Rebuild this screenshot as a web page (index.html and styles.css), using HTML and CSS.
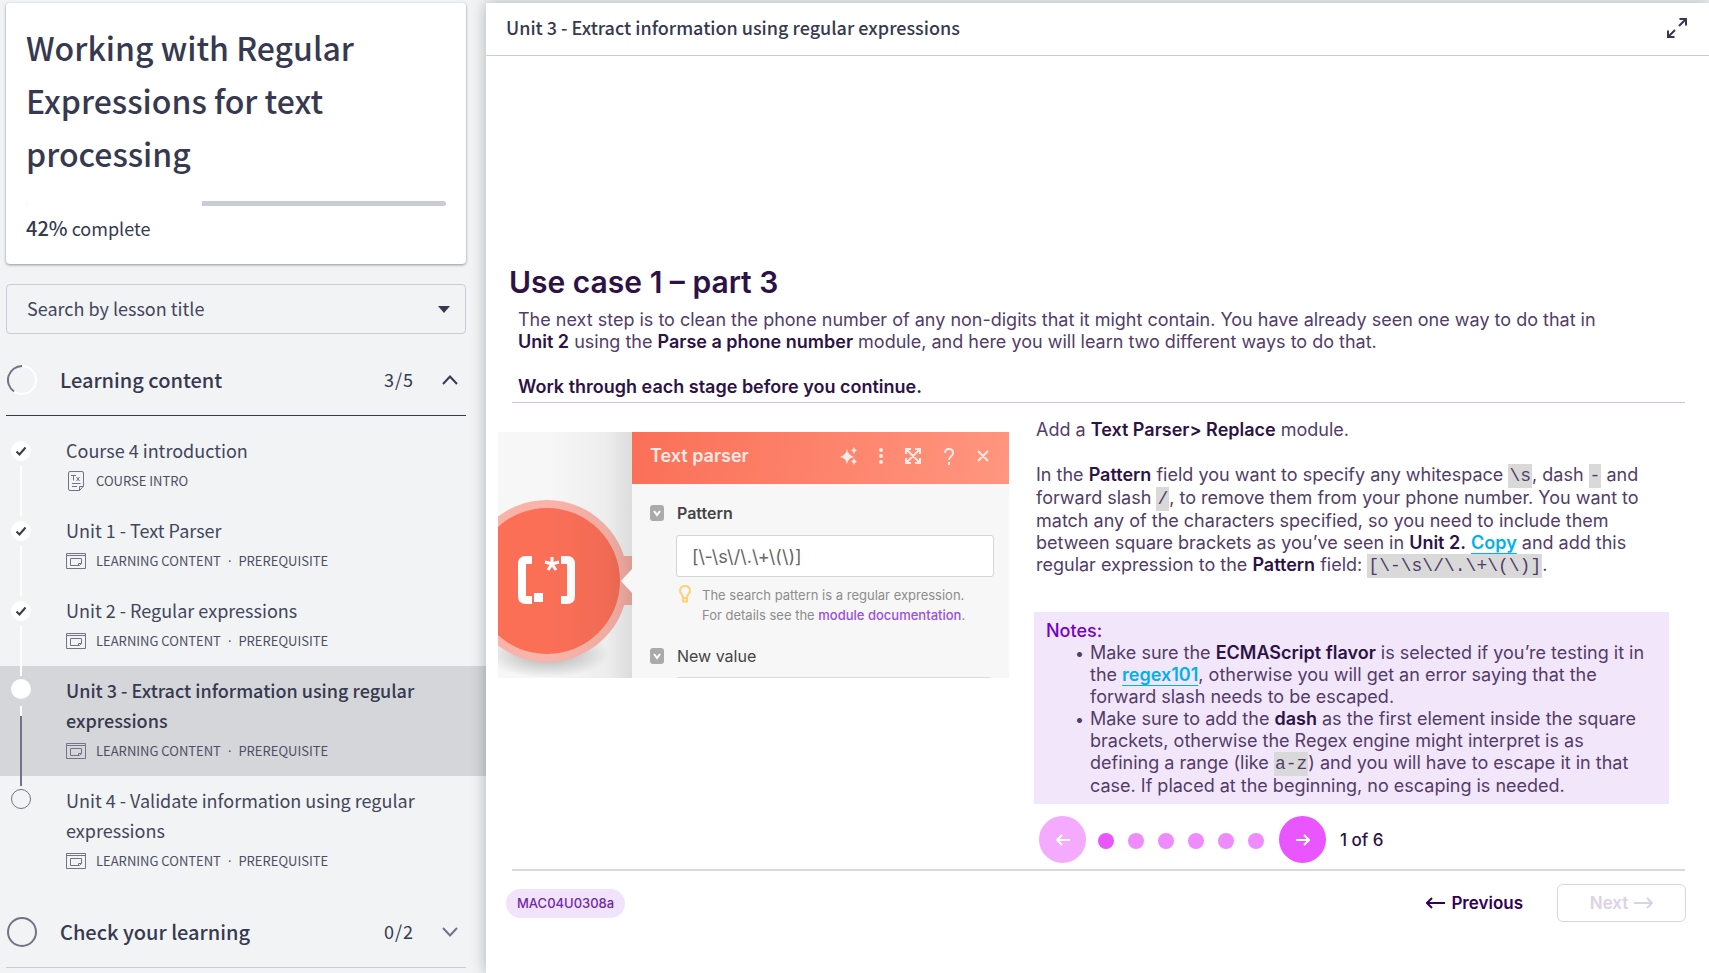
FILE: index.html
```html
<!DOCTYPE html>
<html lang="en">
<head>
<meta charset="utf-8">
<title>Working with Regular Expressions for text processing</title>
<link rel="stylesheet" href="styles.css">
</head>
<body>
<svg class="defs" width="0" height="0" aria-hidden="true">
  <symbol id="content" viewBox="0 0 20 16"><path d="M.5.5h19v15H.5zM.5 2.500h19M4.500 5.500h11v5l-2 2h-9zM12.500 12.500v-2h3"/></symbol>
  <symbol id="check" viewBox="0 0 20 20"><path d="M5.500 10.500l3 3 6-7"/></symbol>
</svg>
<div class="app">
  <aside class="sidebar">
    <section class="card">
      <h1 class="course">Working with Regular Expressions for text processing</h1>
      <div class="progress"><div class="progress-done" style="width:42%"></div></div>
      <p class="percent"><b>42%</b> complete</p>
    </section>
    <div class="search">
      <select class="search-select" aria-label="Search by lesson title"><option>Search by lesson title</option></select>
      <svg class="caret" width="12" height="7" viewBox="0 0 12 7"><path d="M0 0h12L6 7z"/></svg>
    </div>
    <button class="group open">
      <svg class="ring" viewBox="0 0 30 30"><circle cx="15" cy="15" r="14" stroke="#fff"/><path d="M15 1A14 14 0 0 0 7 26.500" stroke="#717486"/></svg>
      <span class="group-name">Learning content</span><span class="count">3/5</span>
      <svg class="chevron" viewBox="0 0 16 10"><path d="M1 9l7-7.500L15 9"/></svg>
    </button>
    <ul class="lessons">
      <li class="lesson done"><svg class="mark"><use href="#check"/></svg>
        <a class="lesson-name" href="#">Course 4 introduction</a>
        <p class="kind"><svg class="kind-icon" viewBox="0 0 20 20"><path d="M2.500 2q0-1.500 1.500-1.500h12q1.500 0 1.500 1.500v13l-4 4.500H4q-1.500 0-1.500-1.500zM13.500 19.500v-4h4M6 12.500h8.500M6 15.500h5M5 4.500h5M7.500 4.500v5M10.500 6l3 4M13.500 6l-3 4"/></svg>COURSE INTRO</p></li>
      <li class="lesson done"><svg class="mark"><use href="#check"/></svg>
        <a class="lesson-name" href="#">Unit 1 - Text Parser</a>
        <p class="kind"><svg class="kind-icon wide"><use href="#content"/></svg>LEARNING CONTENT<span class="sep">·</span>PREREQUISITE</p></li>
      <li class="lesson done"><svg class="mark"><use href="#check"/></svg>
        <a class="lesson-name" href="#">Unit 2 - Regular expressions</a>
        <p class="kind"><svg class="kind-icon wide"><use href="#content"/></svg>LEARNING CONTENT<span class="sep">·</span>PREREQUISITE</p></li>
      <li class="lesson current"><span class="mark"></span>
        <a class="lesson-name" href="#">Unit 3 - Extract information using regular expressions</a>
        <p class="kind"><svg class="kind-icon wide"><use href="#content"/></svg>LEARNING CONTENT<span class="sep">·</span>PREREQUISITE</p></li>
      <li class="lesson todo"><span class="mark"></span>
        <a class="lesson-name" href="#">Unit 4 - Validate information using regular expressions</a>
        <p class="kind"><svg class="kind-icon wide"><use href="#content"/></svg>LEARNING CONTENT<span class="sep">·</span>PREREQUISITE</p></li>
    </ul>
    <button class="group">
      <svg class="ring" viewBox="0 0 30 30"><circle cx="15" cy="15" r="14" stroke="#717486"/></svg>
      <span class="group-name">Check your learning</span><span class="count">0/2</span>
      <svg class="chevron soft" viewBox="0 0 16 10"><path d="M1 1l7 7.500L15 1"/></svg>
    </button>
  </aside>
  <main class="main">
    <header class="topbar">
      <h2 class="unit">Unit 3 - Extract information using regular expressions</h2>
      <button class="expand" aria-label="Full screen"><svg width="20" height="20" viewBox="0 0 20 20"><path d="M12 8l6-6M12.500 1H19v6.500M8 12l-6 6M7.500 19H1v-6.500"/></svg></button>
    </header>
    <article class="slide">
      <h2 class="headline">Use case 1 – part 3</h2>
      <div class="intro">
        <p>The next step is to clean the phone number of any non-digits that it might contain. You have already seen one way to do that in<br><b>Unit 2</b> using the <b>Parse a phone number</b> module, and here you will learn two different ways to do that.</p>
        <p class="stage"><b>Work through each stage before you continue.</b></p>
      </div>
      <div class="columns">
        <figure class="shot">
          <svg class="module" viewBox="0 0 134 246">
            <defs>
              <linearGradient id="shade"><stop offset="0" stop-color="#000" stop-opacity="0"/><stop offset=".7" stop-color="#000" stop-opacity=".04"/><stop offset="1" stop-color="#000" stop-opacity=".11"/></linearGradient>
              <radialGradient id="under"><stop offset="0" stop-color="#000" stop-opacity=".3"/><stop offset="1" stop-color="#000" stop-opacity="0"/></radialGradient>
            </defs>
            <ellipse cx="49" cy="222" rx="62" ry="24" fill="url(#under)"/>
            <path d="M120 124h14v49h-14z" fill="#f8b0a5"/>
            <circle cx="49" cy="149" r="81" fill="#fab3a8"/>
            <circle cx="49" cy="149" r="73" fill="#fb6f57"/>
            <path d="M34 128h-6q-4 0-4 4v32q0 4 4 4h6M63 128h6q4 0 4 4v32q0 4-4 4h-6" fill="none" stroke="#fff" stroke-width="8"/>
            <path d="M36 161h9v9h-9z" fill="#fff"/>
            <path d="M54 125v7M47 130l7 2 7-2M50 138l4-6 4 6" fill="none" stroke="#fff" stroke-width="3"/>
            <path d="M50 0h84v246H50z" fill="url(#shade)"/>
            <path d="M134 137l-11 12 11 12z" fill="#f7f7f7"/>
          </svg>
          <div class="panel">
            <div class="panel-head">
              <span class="panel-title">Text parser</span>
              <svg class="panel-icons" viewBox="0 0 149 20">
                <path class="fill" d="M7 3q1 6 7 8-6 1-7 7-1-6-7-7 6-2 7-8zM14 1q.5 3 3 3.500Q14.500 5 14 8q-.5-3-3-3.500 2.500-.5 3-3.500zM14 12q.5 3 3 3.500-2.500.5-3 3.500-.5-3-3-3.500 2.500-.5 3-3.500z"/>
                <circle class="fill" cx="41" cy="4" r="2"/><circle class="fill" cx="41" cy="10" r="2"/><circle class="fill" cx="41" cy="16" r="2"/>
                <path d="M67 4l12 12M79 4L67 16M66 8V3h5M75 3h5v5M80 12v5h-5M71 17h-5v-5M105 7q0-4 4-4t4 4q0 2-2 3.500t-2 3.500M109 16v3M138 5l10 10M148 5l-10 10"/>
              </svg>
            </div>
            <div class="panel-body">
              <label class="field strong" for="pattern"><svg class="toggle" viewBox="0 0 14 16"><path d="M4 6l3 4 3-4"/></svg>Pattern</label>
              <input class="box" id="pattern" value="[\-\s\/\.\+\(\)]">
              <div class="hint"><svg class="bulb" viewBox="0 0 12 18"><path d="M4 13q0-2-1.500-4Q1 7.500 1 5.500 1.500 1 6 1t5 4.500q0 2-1.500 3.500Q8 11 8 13zM4 14v2.500h4V14"/></svg><p>The search pattern is a regular expression.<br>For details see the <a class="doc" href="#">module documentation</a>.</p></div>
              <div class="field"><svg class="toggle" viewBox="0 0 14 16"><path d="M4 6l3 4 3-4"/></svg>New value</div>
              <div class="cut"></div>
            </div>
          </div>
        </figure>
        <section class="steps">
          <p class="step">Add a <b>Text Parser&gt; Replace</b> module.</p>
          <p class="step pattern-step">In the <b>Pattern</b> field you want to specify any whitespace <code>\s</code>, dash <code>-</code> and<br>forward slash <code>/</code>, to remove them from your phone number. You want to<br>match any of the characters specified, so you need to include them<br>between square brackets as you’ve seen in <b>Unit 2.</b> <a class="link" href="#">Copy</a> and add this<br>regular expression to the <b>Pattern</b> field: <code>[\-\s\/\.\+\(\)]</code>.</p>
          <div class="notes">
            <h3 class="notes-title">Notes:</h3>
            <ul class="notes-list">
              <li>Make sure the <b>ECMAScript flavor</b> is selected if you’re testing it in<br>the <a class="link" href="#">regex101</a>, otherwise you will get an error saying that the<br>forward slash needs to be escaped.</li>
              <li>Make sure to add the <b>dash</b> as the first element inside the square<br>brackets, otherwise the Regex engine might interpret is as<br>defining a range (like <code>a-z</code>) and you will have to escape it in that<br>case. If placed at the beginning, no escaping is needed.</li>
            </ul>
          </div>
          <nav class="pager" aria-label="Stages">
            <button class="round off" aria-label="Previous stage"><svg width="14" height="12" viewBox="0 0 14 12"><path d="M14 6H1M6 1L1 6l5 5"/></svg></button>
            <div class="dots"><i class="dot on"></i><i class="dot"></i><i class="dot"></i><i class="dot"></i><i class="dot"></i><i class="dot"></i></div>
            <button class="round" aria-label="Next stage"><svg width="14" height="12" viewBox="0 0 14 12"><path d="M0 6h13M8 1l5 5-5 5"/></svg></button>
            <span class="page">1 of 6</span>
          </nav>
        </section>
      </div>
      <footer class="foot">
        <span class="badge">MAC04U0308a</span>
        <button class="nav-btn"><svg width="19" height="12" viewBox="0 0 19 12"><path d="M19 6H1M6 1L1 6l5 5"/></svg>Previous</button>
        <button class="nav-btn next" disabled>Next<svg width="19" height="12" viewBox="0 0 19 12"><path d="M0 6h18M13 1l5 5-5 5"/></svg></button>
      </footer>
    </article>
  </main>
</div>
</body>
</html>
```
FILE: styles.css
```css
* { box-sizing: border-box; }
body { margin: 0; background: #f1f3f5; color: #363950; font-family: "Noto Sans CJK SC", "Noto Sans", sans-serif; }
h1, h2, h3, p, ul, figure { margin: 0; padding: 0; }
ul { list-style: none; }
button { border: 0; padding: 0; background: none; font: inherit; color: inherit; cursor: pointer; }
a { color: inherit; text-decoration: none; }
svg { fill: none; stroke: currentColor; display: block; flex: none; }
.defs { position: absolute; }
.app { display: flex; min-height: 100vh; }

.sidebar { flex: none; width: 486px; padding-top: 3px; overflow: hidden; }
.card { margin: 0 20px 20px 6px; padding: 18px 20px 20px; background: #fff; border-radius: 4px; box-shadow: 0 1px 3px rgba(0, 0, 0, .4); }
.course { font-size: 32px; line-height: 53px; font-weight: 500; }
.progress { height: 5px; margin: 21px 0 6px; border-radius: 3px; background: #c9cbd7; overflow: hidden; }
.progress-done { height: 5px; background: #fff; }
.percent { font-size: 18px; line-height: 32px; font-weight: 400; }
.percent b { font-size: 20px; font-weight: 500; }
.search { position: relative; margin: 0 20px 11px 6px; }
.search-select { display: block; appearance: none; width: 100%; height: 50px; padding: 0 20px 2px; border: 1px solid #c9cbd7; border-radius: 4px; background: transparent; color: #43465b; font: 400 18px/30px "Noto Sans CJK SC", sans-serif; }
.caret { position: absolute; right: 16px; top: 22px; fill: #363950; stroke: none; }
.group { display: flex; align-items: center; width: 460px; height: 71px; margin-left: 6px; border-bottom: 1px solid #c9cbd7; text-align: left; }
.group.open { border-color: #363950; }
.ring { width: 30px; height: 30px; margin: 0 23px 0 1px; stroke-width: 2; }
.group-name { flex: 1; padding-bottom: 2px; font-size: 20px; font-weight: 500; }
.count { margin-right: 28px; padding-bottom: 2px; font-size: 18px; font-weight: 400; letter-spacing: 1px; }
.chevron { width: 16px; height: 10px; margin-right: 8px; stroke-width: 2; }
.soft { color: #717486; }
.lessons { padding: 10px 0 11px; }
.lesson { position: relative; padding: 9px 60px 10px 66px; }
.lesson-name { display: block; padding-bottom: 1px; color: #43465b; font-size: 18px; line-height: 30px; font-weight: 400; }
.kind { display: flex; align-items: center; color: #4c4f64; font-size: 13px; line-height: 30px; font-weight: 400; }
.kind-icon { width: 20px; height: 20px; margin-right: 10px; color: #717486; }
.wide { height: 16px; }
.sep { margin: 0 7px; font-family: "Noto Sans", sans-serif; }
.mark { position: absolute; left: 11px; top: 15px; width: 20px; height: 20px; border-radius: 50%; background: #fff; stroke-width: 2; z-index: 1; }
.lesson::after { content: ""; position: absolute; left: 20px; top: 40px; bottom: -10px; width: 2px; background: #fff; z-index: 1; }
.current { background: #d5d6da; }
.current .lesson-name { color: #363950; font-weight: 500; }
.current .mark, .todo .mark { top: 13px; }
.current::after { background: linear-gradient(#fff 10px, #717486 10px); }
.todo .mark { border: 1px solid #717486; background: transparent; }
.todo::after { display: none; }

.main { position: relative; flex: 1; min-width: 0; margin-top: 3px; background: #fff; box-shadow: 0 0 14px rgba(0, 0, 0, .28); z-index: 2; }
.topbar { display: flex; align-items: center; justify-content: space-between; height: 53px; padding: 0 22px 2px 20px; border-bottom: 1px solid #c9cbd7; }
.unit { padding-bottom: 2px; font-size: 18px; line-height: 30px; font-weight: 500; }
.expand svg { stroke-width: 2; }

.slide { padding: 208px 24px 40px 26px; color: #533c69; font-family: Inter, sans-serif; font-size: 18px; font-weight: 400; line-height: 22px; }
.slide b { color: #2d1247; font-weight: 600; }
.headline { margin-left: -3px; color: #2d1247; font-size: 30px; line-height: 36px; font-weight: 600; }
.intro { padding: 9px 0 4px 6px; border-bottom: 1px solid #d0c8d0; white-space: nowrap; }
.stage { margin-top: 23px; }
.columns { display: grid; grid-template-columns: 511px 1fr; gap: 25px; margin-left: -14px; }
.shot { display: flex; height: 246px; margin-top: 29px; overflow: hidden; background: #f7f7f7; color: #444; }
.module { width: 134px; height: 246px; stroke: none; }
.panel { flex: 1; background: #f7f7f7; }
.panel-head { display: flex; align-items: center; justify-content: space-between; height: 52px; padding: 0 20px 4px 18px; background: linear-gradient(100deg, #fb6f57, #ff967f); color: #ffe9e4; }
.panel-title { font-size: 18px; font-weight: 600; }
.panel-icons { width: 149px; height: 20px; stroke-width: 2; }
.fill { fill: currentColor; stroke: none; }
.panel-body { padding: 18px 15px 0 18px; }
.field { display: flex; align-items: center; gap: 13px; font-size: 16px; line-height: 22px; font-weight: 400; }
.strong { font-weight: 600; }
.toggle { width: 14px; height: 16px; border-radius: 3px; background: #aaa; color: #fff; stroke-width: 2; }
.box { display: block; width: calc(100% - 26px); height: 42px; margin: 11px 0 8px 26px; padding: 0 15px; border: 1px solid #d5d5d5; border-radius: 3px; background: #fff; color: #666; font: 400 18px Inter, sans-serif; }
.hint { display: flex; gap: 11px; margin: 0 0 20px 29px; color: #8c8c8c; font-size: 13px; font-weight: 400; line-height: 20px; white-space: nowrap; }
.bulb { width: 12px; height: 18px; color: #fbd275; stroke-width: 2; }
.doc { color: #9b4fe0; font-weight: 500; }
.cut { height: 4px; margin: 10px 3px 0 27px; border-top: 2px solid #ddd; }

.steps { padding-top: 16px; padding-left: 2px; white-space: nowrap; }
.pattern-step { margin: 23px 0 35px; }
code { padding: 2px 1px; background: #d9d9d9; font-family: "Liberation Mono", monospace; font-size: 18px; }
.link { color: #00b0f0; font-weight: 600; text-decoration: underline; text-underline-offset: 4px; }
.notes { margin: 0 16px 12px -2px; padding: 7px 12px; background: #f2e6fa; }
.notes-title { color: #7500c9; font-size: 18px; font-weight: 500; line-height: 23px; }
.notes-list { padding-left: 44px; }
.notes-list li { position: relative; }
.notes-list li::before { content: "•"; position: absolute; left: -15px; font-size: 16px; }
.pager { display: flex; align-items: center; margin-left: 3px; }
.round { display: grid; place-items: center; width: 47px; height: 47px; border-radius: 50%; background: #e955ff; color: #fff; }
.round svg { stroke-width: 2; }
.off { background: #f3aaff; }
.dots { display: flex; gap: 14px; padding: 2px 15px 0 12px; }
.dot { width: 16px; height: 16px; border-radius: 50%; background: #ef8aff; }
.on { background: #e955ff; }
.page { margin-left: 14px; color: #2d1247; font-size: 17px; font-weight: 500; }
.foot { display: flex; align-items: center; margin-top: 6px; padding-top: 13px; border-top: 2px solid #ddd8dd; }
.badge { margin: 0 auto 0 -6px; padding: 0 11px; border-radius: 15px; background: #f0e3fb; color: #7327a5; font-size: 13px; line-height: 29px; font-weight: 500; }
.nav-btn { display: flex; align-items: center; justify-content: center; gap: 6px; height: 38px; margin-right: 34px; color: #32005c; font-size: 17px; font-weight: 600; }
.nav-btn svg { stroke-width: 2; }
.next { width: 129px; margin-right: -1px; border: 1px solid #dcd2e6; border-radius: 6px; color: #dcd2e6; }
```
